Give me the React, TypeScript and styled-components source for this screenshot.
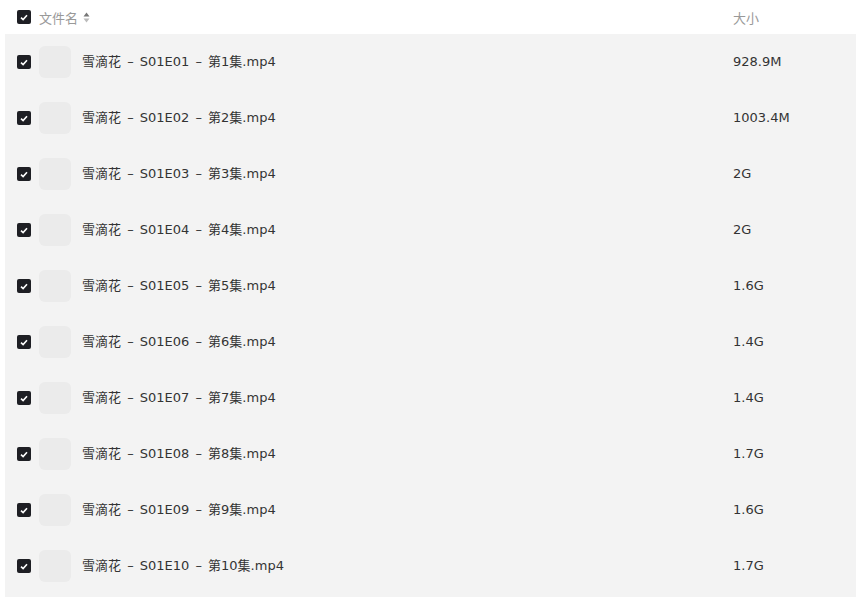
import styled, { createGlobalStyle } from "styled-components";

type FileItem = {
  name: string;
  size: string;
};

const files: FileItem[] = [
  { name: "雪滴花 – S01E01 – 第1集.mp4", size: "928.9M" },
  { name: "雪滴花 – S01E02 – 第2集.mp4", size: "1003.4M" },
  { name: "雪滴花 – S01E03 – 第3集.mp4", size: "2G" },
  { name: "雪滴花 – S01E04 – 第4集.mp4", size: "2G" },
  { name: "雪滴花 – S01E05 – 第5集.mp4", size: "1.6G" },
  { name: "雪滴花 – S01E06 – 第6集.mp4", size: "1.4G" },
  { name: "雪滴花 – S01E07 – 第7集.mp4", size: "1.4G" },
  { name: "雪滴花 – S01E08 – 第8集.mp4", size: "1.7G" },
  { name: "雪滴花 – S01E09 – 第9集.mp4", size: "1.6G" },
  { name: "雪滴花 – S01E10 – 第10集.mp4", size: "1.7G" },
];

function CheckBox() {
  return (
    <Check>
      <svg width="8" height="7" viewBox="0 0 8 7">
        <path d="M1 3.6 L3.1 5.6 L7 1.2" fill="none" stroke="#fff" strokeWidth="1.6" />
      </svg>
    </Check>
  );
}

function SortIcon() {
  return (
    <svg width="7" height="11" viewBox="0 0 7 11">
      <path d="M3.5 0.5 L6.5 4.5 L0.5 4.5 Z" fill="#777" />
      <path d="M3.5 10.5 L6.5 6.5 L0.5 6.5 Z" fill="#bbb" />
    </svg>
  );
}

function App() {
  return (
    <>
      <GlobalStyle />
      <Page>
        <Header>
          <CheckCell>
            <CheckBox />
          </CheckCell>
          <HeaderName>
            文件名
            <SortIcon />
          </HeaderName>
          <HeaderSize>大小</HeaderSize>
        </Header>
        <List>
          {files.map((f) => (
            <Row key={f.name}>
              <CheckCell>
                <CheckBox />
              </CheckCell>
              <Thumb />
              <FileName>{f.name}</FileName>
              <FileSize>{f.size}</FileSize>
            </Row>
          ))}
        </List>
      </Page>
    </>
  );
}

const GlobalStyle = createGlobalStyle`
  body {
    margin: 0;
    background: #fff;
    font-family: "DejaVu Sans", Verdana, "Noto Sans CJK SC", sans-serif;
  }
`;

const Page = styled.div`
  width: 857px;
  height: 608px;
  padding-left: 5px;
  padding-right: 1px;
  box-sizing: border-box;
`;

const Header = styled.div`
  display: flex;
  align-items: center;
  height: 34px;
  padding-left: 12px;
`;

const CheckCell = styled.div`
  width: 22px;
  display: flex;
  align-items: center;
`;

const Check = styled.div`
  width: 14px;
  height: 14px;
  border-radius: 2px;
  background: #1e1f24;
  display: flex;
  align-items: center;
  justify-content: center;
`;

const HeaderName = styled.div`
  display: flex;
  align-items: center;
  gap: 5px;
  flex: 1;
  font-size: 13px;
  color: #999;
`;

const HeaderSize = styled.div`
  width: 123px;
  font-size: 13px;
  color: #999;
`;

const List = styled.div`
  background: #f3f3f3;
  padding-bottom: 3px;
`;

const Row = styled.div`
  display: flex;
  align-items: center;
  height: 56px;
  padding-left: 12px;
`;

const Thumb = styled.div`
  width: 32px;
  height: 32px;
  border-radius: 6px;
  background: #ebebeb;
  margin-right: 11px;
`;

const FileName = styled.div`
  flex: 1;
  font-size: 13px;
  line-height: 16px;
  word-spacing: 2px;
  color: #333;
`;

const FileSize = styled.div`
  width: 123px;
  font-size: 13px;
  line-height: 16px;
  color: #333;
`;

export default App;
